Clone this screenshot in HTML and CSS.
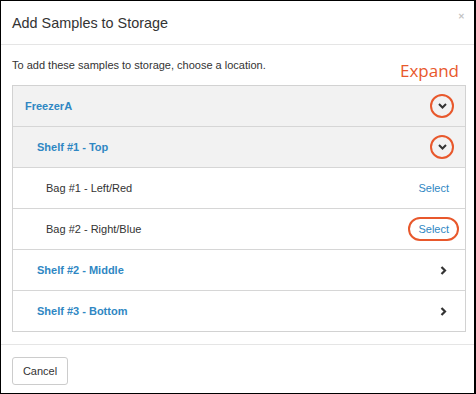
FILE: index.html
```html
<!DOCTYPE html>
<html lang="en">
<head>
    <meta charset="UTF-8">
    <title>Add Samples to Storage</title>
    <link rel="stylesheet" href="styles.css">
</head>
<body>
    <div class="modal">
        <div class="modal-header">
            <span class="modal-title">Add Samples to Storage</span>
            <span class="close">&#x2715;</span>
        </div>

        <div class="modal-body">
            <div class="intro">
                <span class="intro-text">To add these samples to storage, choose a location.</span>
                <span class="note">Expand</span>
            </div>

            <div class="location-list">
                <div class="row row-open">
                    <span class="link bold">FreezerA</span>
                    <span class="ring">
                        <svg width="9" height="6" viewBox="0 0 9 6"><polyline points="1,1 4.5,4.5 8,1" fill="none" stroke="#333" stroke-width="2"/></svg>
                    </span>
                </div>
                <div class="row row-open level-1">
                    <span class="link bold">Shelf #1 - Top</span>
                    <span class="ring">
                        <svg width="9" height="6" viewBox="0 0 9 6"><polyline points="1,1 4.5,4.5 8,1" fill="none" stroke="#333" stroke-width="2"/></svg>
                    </span>
                </div>
                <div class="row level-2">
                    <span class="bag">Bag #1 - Left/Red</span>
                    <span class="link select">Select</span>
                </div>
                <div class="row level-2">
                    <span class="bag">Bag #2 - Right/Blue</span>
                    <span class="link select select-marked">Select</span>
                </div>
                <div class="row level-1">
                    <span class="link bold">Shelf #2 - Middle</span>
                    <svg class="arrow" width="7" height="9" viewBox="0 0 7 9"><polyline points="1.5,1 5,4.5 1.5,8" fill="none" stroke="#333" stroke-width="2.2"/></svg>
                </div>
                <div class="row level-1">
                    <span class="link bold">Shelf #3 - Bottom</span>
                    <svg class="arrow" width="7" height="9" viewBox="0 0 7 9"><polyline points="1.5,1 5,4.5 1.5,8" fill="none" stroke="#333" stroke-width="2.2"/></svg>
                </div>
            </div>
        </div>

        <div class="modal-footer">
            <button class="btn">Cancel</button>
        </div>
    </div>
</body>
</html>
```

FILE: styles.css
```css
html, body {
    margin: 0;
    background: #fff;
}

.modal {
    width: 476px;
    height: 394px;
    box-sizing: border-box;
    border: 1px solid #000;
    border-right-width: 2px;
    font-family: "Liberation Sans", Arial, sans-serif;
    color: #333;
    display: flex;
    flex-direction: column;
}

.modal-header {
    height: 43px;
    border-bottom: 1px solid #e5e5e5;
    display: flex;
    justify-content: space-between;
    align-items: center;
    padding: 0 9px 0 11px;
}

.modal-title {
    font-size: 14.4px;
    color: #333;
    margin-top: 1px;
}

.close {
    align-self: flex-start;
    margin-top: 12px;
    font-size: 8px;
    font-weight: bold;
    color: #c4c4c4;
    line-height: 8px;
}

.modal-body {
    padding: 12px 8px 12px 11px;
}

.intro {
    height: 28px;
    display: flex;
    justify-content: space-between;
}

.intro-text {
    font-size: 11px;
    line-height: 16px;
    align-self: flex-start;
}

.note {
    align-self: flex-end;
    font-family: "Open Sans", sans-serif;
    font-size: 17px;
    line-height: 20px;
    color: #e8582c;
    margin: 0 7px 4px 0;
}

.location-list {
    border: 1px solid #d2d2d2;
}

.row {
    height: 40px;
    display: flex;
    justify-content: space-between;
    align-items: center;
    padding: 0 16px 0 12px;
    font-size: 11px;
}

.row + .row {
    border-top: 1px solid #d6d6d6;
}

.row-open {
    background: #f2f2f2;
    padding-right: 11px;
}

.level-1 {
    padding-left: 24px;
}

.level-2 {
    padding-left: 33px;
}

.link {
    color: #2f87c3;
}

.bold {
    font-weight: bold;
}

.bag {
    color: #333;
}

.ring {
    width: 20px;
    height: 20px;
    border: 2px solid #e8582c;
    border-radius: 50%;
    display: flex;
    justify-content: center;
    align-items: center;
}

.arrow {
    margin-right: 2px;
}

.select-marked {
    border: 2px solid #e8582c;
    border-radius: 12px;
    padding: 4px 8px;
    margin-right: -10px;
}

.modal-footer {
    border-top: 1px solid #e5e5e5;
    padding: 12px 11px 8px;
}

.btn {
    height: 28px;
    width: 56px;
    background: #fff;
    border: 1px solid #ccc;
    border-radius: 3px;
    font-family: "Liberation Sans", Arial, sans-serif;
    font-size: 11px;
    color: #333;
    padding: 0;
}
```
